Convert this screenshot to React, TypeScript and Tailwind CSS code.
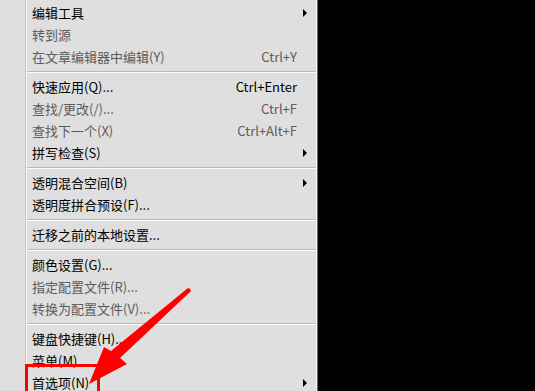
import React from 'react';

type Item =
  | { sep: true }
  | { sep?: false; label: string; shortcut?: string; sub?: boolean; disabled?: boolean };

const items: Item[] = [
  { label: '编辑工具', sub: true },
  { label: '转到源', disabled: true },
  { label: '在文章编辑器中编辑(Y)', shortcut: 'Ctrl+Y', disabled: true },
  { sep: true },
  { label: '快速应用(Q)...', shortcut: 'Ctrl+Enter' },
  { label: '查找/更改(/)...', shortcut: 'Ctrl+F', disabled: true },
  { label: '查找下一个(X)', shortcut: 'Ctrl+Alt+F', disabled: true },
  { label: '拼写检查(S)', sub: true },
  { sep: true },
  { label: '透明混合空间(B)', sub: true },
  { label: '透明度拼合预设(F)...' },
  { sep: true },
  { label: '迁移之前的本地设置...' },
  { sep: true },
  { label: '颜色设置(G)...' },
  { label: '指定配置文件(R)...', disabled: true },
  { label: '转换为配置文件(V)...', disabled: true },
  { sep: true },
  { label: '键盘快捷键(H)...' },
  { label: '菜单(M)' },
  { label: '首选项(N)', sub: true },
];

function Row({ item }: { item: Item }) {
  if (item.sep) {
    return (
      <div className="py-[3px]">
        <div className="h-[1px] bg-[#b9b9b9]" />
        <div className="h-[1px] bg-[#fbfbfb]" />
      </div>
    );
  }
  const color = item.disabled ? 'text-[#5c5c5c]' : 'text-black';
  return (
    <div className="flex h-[22px] items-center pl-[5px]">
      <span className={`flex-1 whitespace-nowrap ${color}`}>{item.label}</span>
      {item.shortcut && <span className={`whitespace-nowrap ${color}`}>{item.shortcut}</span>}
      <span className="flex w-[19px] justify-start pl-[6px]">
        {item.sub && (
          <svg width="5" height="8" viewBox="0 0 5 8">
            <path d="M0 0 L4 4 L0 8 Z" fill="#000" />
          </svg>
        )}
      </span>
    </div>
  );
}

export default function App() {
  return (
    <div
      className="relative flex h-[391px] w-[535px] overflow-hidden bg-black text-[13px]"
      style={{ fontFamily: '"Noto Sans CJK SC", "Microsoft YaHei", sans-serif' }}
    >
      <div className="flex w-[318px] bg-[#dfdfdf]">
        <div className="w-[26px] border-r border-[#c6c6c6]" />
        <div className="w-[1px] bg-[#f7f7f7]" />
        <div className="flex-1 pt-[2px]">
          {items.map((it, i) => (
            <Row key={i} item={it} />
          ))}
        </div>
        <div className="w-[1px] bg-[#f2f2f2]" />
        <div className="w-[1px] bg-[#6a6a6a]" />
      </div>

      {/* highlight box */}
      <div className="pointer-events-none absolute left-[25px] top-[364px] h-[40px] w-[75px] border-[3px] border-[#ff0000]" />

      {/* pointer arrow */}
      <svg className="pointer-events-none absolute left-0 top-0" width="535" height="391" viewBox="0 0 535 391">
        <polygon
          points="190,289 191,291 120,358 127,364 89,384 104,347 111,351 188,288"
          fill="#ff0000"
        />
      </svg>
    </div>
  );
}
